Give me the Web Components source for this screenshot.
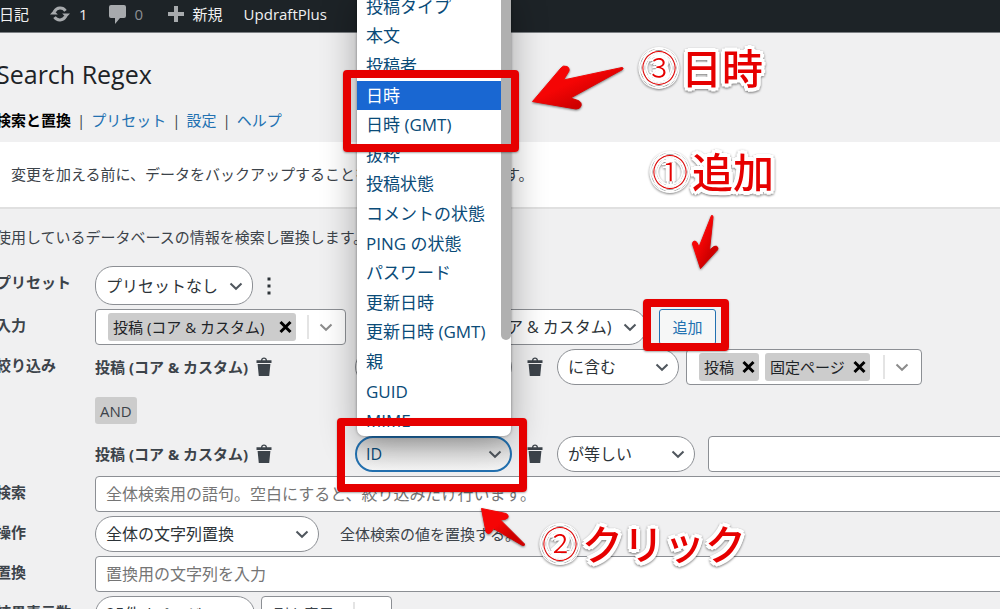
<!DOCTYPE html>
<html lang="ja">
<head>
<meta charset="utf-8">
<title>Search Regex</title>
<style>
html{overflow:hidden}
body{margin:0;background:#f0f0f1;font:15px/20px "Open Sans","Noto Sans CJK JP",sans-serif;color:#3c434a}
</style>
</head>
<body>
<regex-app></regex-app>
<script>
function element(name, css, render) {
  customElements.define(name, class extends HTMLElement {
    connectedCallback() {
      if (this.shadowRoot) return;
      const root = this.attachShadow({ mode: 'open' });
      root.innerHTML = '<style>*{box-sizing:border-box}' + css + '</style>' + render(this);
    }
  });
}
const attr = (el, n, d = '') => el.getAttribute(n) || d;

element('chevron-icon', ':host{display:block;width:14px;height:14px;color:#50575e}svg{display:block}',
  () => '<svg width="14" height="14" viewBox="0 0 14 14" fill="none" stroke="currentColor" stroke-width="2"><path d="M1.5 4.5 7 9.8l5.500-5.300"/></svg>');

/* rounded drop-down */
element('pill-select', `
  :host{display:block;position:relative;width:var(--w,158px);height:var(--h,36px);flex:none}
  select{appearance:none;width:100%;height:100%;margin:0;padding:0 30px 0 10px;border:1px solid #8c8f94;border-radius:18px;
    background:#fff;color:#2c3338;font:inherit;font-size:16px;outline:none}
  :host([focused]) select{border:2px solid #2271b1;color:#0a4b78;padding-left:9px;background:linear-gradient(#cdcdcd,#e6e6e6 45%,#f8f8f8)}
  chevron-icon{position:absolute;right:10px;top:0;bottom:0;margin:auto;pointer-events:none}`,
  el => `<select aria-label="${attr(el, 'label')}"><option>${attr(el, 'value')}</option></select><chevron-icon></chevron-icon>`);

/* box of removable tags */
element('tag-select', `
  :host{display:flex;align-items:center;width:var(--w);height:36px;padding-left:12px;border:1px solid #8c8f94;border-radius:4px;background:#fff;flex:none}
  .tags{display:flex;gap:6px;flex:1}
  ::slotted(*){flex:none}
  button{border:0;border-left:2px solid #e4e4e4;background:none;padding:0 10px;height:24px;margin:0}
  chevron-icon{color:#8c8c8c;width:16px}`,
  el => `<div class="tags"><slot></slot></div><button aria-label="${attr(el, 'label')}を開く"><chevron-icon></chevron-icon></button>`);

element('tag-item', `
  :host{display:flex;align-items:center;justify-content:space-between;min-width:var(--min,0);height:28px;padding:0 4px 0 5px;border-radius:3px;background:#ccc;color:#1d2327;white-space:nowrap}
  button{border:0;background:none;padding:0;margin:0 0 0 8px;display:block;color:#000}svg{display:block}`,
  () => `<slot></slot><button aria-label="削除"><svg width="13" height="14" viewBox="0 0 13 14" stroke="currentColor" stroke-width="3"><path d="M1.500 2 11.500 12M11.500 2 1.500 12"/></svg></button>`);

element('trash-button', `
  :host{display:block}button{border:0;padding:0;margin:0;background:none;color:#3c434a;display:block}svg{display:block}`,
  () => `<button aria-label="削除"><svg width="16" height="20" viewBox="0 0 16 20" fill="currentColor"><path d="M.500 3.200H5Q5.300.500 8 .500T11 3.200h4.500V6H.500zM6.300 3.200h3.400Q9.300 1.800 8 1.800T6.300 3.200zM1.600 7h12.800l-1.200 12H2.800z"/></svg></button>`);

element('text-field', `
  :host{display:block;flex:1;height:36px}
  input{width:100%;height:100%;margin:0;padding:0 10px;border:1px solid #8c8f94;border-radius:4px;background:#fff;font:inherit;font-size:16px;outline:none}
  input::placeholder{color:#757575;opacity:1}`,
  el => `<input type="text" aria-label="${attr(el, 'label')}" placeholder="${attr(el, 'placeholder')}">`);

element('form-row', `
  :host{display:grid;grid-template-columns:99px minmax(0,1fr)}
  .label{padding-top:6px;font-weight:700;white-space:nowrap}
  .body{display:flex;align-items:center}`,
  el => `<div class="label">${attr(el, 'label')}</div><div class="body"><slot></slot></div>`);

element('filter-line', `
  :host{display:grid;grid-template-columns:260px 157px 45px minmax(0,1fr);align-items:center;height:36px;flex:1}
  .name{display:flex;align-items:center;gap:8px;font-weight:700;white-space:nowrap}
  .mid{position:relative;z-index:5}
  .trash{padding-left:15px}
  .cond{display:flex;align-items:center}`,
  () => `<div class="name">投稿 (コア &amp; カスタム)<trash-button></trash-button></div>
   <div class="mid"><slot name="field"></slot></div><div class="trash"><trash-button></trash-button></div><div class="cond"><slot></slot></div>`);

/* opened list of fields, hanging above its select */
element('option-menu', `
  :host{position:absolute;left:2px;bottom:100%;width:154px;height:444px;display:flex;background:#fff;border-radius:0 0 7px 7px;
    box-shadow:0 8px 36px rgba(0,0,0,.32),0 0 3px rgba(0,0,0,.4);overflow:hidden}
  ul{list-style:none;margin:0;padding:0;flex:1;display:flex;flex-direction:column;color:#0a4b78;font-size:17px}
  li{flex:1;display:flex;align-items:center;padding-left:9px;white-space:nowrap}
  li[aria-selected=true]{background:#1967d2;color:#fff}
  .bar{width:10px}.thumb{height:348px;background:#b0b0b0;border-radius:0 0 5px 5px}`,
  () => '<ul role="listbox" aria-label="項目">' +
    ['投稿タイプ','本文','投稿者','日時','日時 (GMT)','抜粋','投稿状態','コメントの状態','PING の状態','パスワード','更新日時','更新日時 (GMT)','親','GUID','MIME']
    .map((t, i) => `<li role="option" aria-selected="${i === 3}">${t}</li>`).join('') + '</ul><div class="bar"><div class="thumb"></div></div>');

element('admin-bar', `
  :host{display:flex;align-items:center;box-sizing:border-box;height:33px;padding-bottom:4px;margin-left:-1px;background:#1d2327;border-bottom:1px solid #7c8084;color:#f0f0f1;white-space:nowrap;overflow:hidden}
  a{display:flex;align-items:center;color:inherit;text-decoration:none;gap:9px;margin-right:21px}
  svg{display:block;color:#a7aaad}.dim{color:#8c8f94;min-width:38px}`,
  () => `<a href="#">日記</a>
  <a href="#"><svg width="20" height="18" viewBox="0 0 20 18"><g fill="none" stroke="currentColor" stroke-width="3"><path d="M4.500 6.500A6.500 6.500 0 0 1 15.500 5.800"/><path d="M15.500 11.500A6.500 6.500 0 0 1 4.500 12.200"/></g><path fill="currentColor" d="M12.200 8.500h7.800L16.200 12.800zM0 9.500h7.800L3.800 5.200z"/></svg>1</a>
  <a href="#" class="dim"><svg width="17" height="20" viewBox="0 0 17 20" fill="currentColor"><path d="M2 1h13q2 0 2 2v9q0 2-2 2h-4l-5 6v-6H2q-2 0-2-2V3q0-2 2-2z"/></svg>0</a>
  <a href="#"><svg width="16" height="16" viewBox="0 0 16 16" fill="currentColor"><path d="M6 0h4v6h6v4h-6v6H6v-6H0V6h6z"/></svg>新規</a>
  <a href="#">UpdraftPlus</a>`);

element('page-header', `
  :host{display:block;box-sizing:border-box;padding:25px 0 0;height:109px}
  h1{margin:0;font-size:25px;line-height:32px;font-weight:400;color:#1d2327;white-space:nowrap}
  nav{display:flex;gap:6px;margin-top:20px;white-space:nowrap}
  a{color:#2271b1;text-decoration:none}a[aria-current]{color:#000;font-weight:700}`,
  () => `<h1>Search Regex</h1><nav><a href="#" aria-current="page">検索と置換</a><span>|</span><a href="#">プリセット</a><span>|</span><a href="#">設定</a><span>|</span><a href="#">ヘルプ</a></nav>`);

element('notice-bar', `:host{display:block;padding:22px 15px 23px;background:#fff;border-bottom:2px solid #e0e0e0;white-space:nowrap}`,
  () => '<slot></slot>');

element('logic-tag', `:host{display:block;box-sizing:border-box;height:27px;padding:4px 5px;border-radius:3px;background:#ccc}`, () => '<slot></slot>');

element('add-button', `:host{display:block;margin-left:12px}button{height:36px;width:57px;padding:0;border:1px solid #2271b1;border-radius:3px;background:#f6f7f7;color:#2271b1;font:inherit}`,
  () => '<button><slot></slot></button>');

/* annotations laid over the page */
element('mark-box', `:host{position:absolute;box-sizing:border-box;z-index:9;border:8px solid #e60000;border-radius:4px;box-shadow:0 1px 2px rgba(0,0,0,.35)}`, () => '');
element('mark-text', `
  :host{position:absolute;z-index:9;display:flex;gap:4px;font-size:41px;line-height:48px;font-weight:500;font-family:"Noto Sans CJK JP",sans-serif;color:#e60000;white-space:nowrap;
   text-shadow:4px 0 #fff,-4px 0 #fff,0 4px #fff,0 -4px #fff,3px 3px #fff,-3px 3px #fff,3px -3px #fff,-3px -3px #fff,2px 0 #fff,-2px 0 #fff,0 2px #fff,0 -2px #fff;
   filter:drop-shadow(0 1px 1px rgba(0,0,0,.5))}
  ::slotted(i){font-style:normal;font-weight:300;font-size:36px}`, () => '<slot></slot>');
element('mark-arrows', `:host{position:absolute;z-index:9;left:0;top:0;pointer-events:none}svg{display:block;filter:drop-shadow(0 1px 1px rgba(0,0,0,.5))}`,
  () => `<svg width="760" height="600" viewBox="0 0 760 600"><defs><linearGradient id="g" x1="0" y1="0" x2="1" y2="1"><stop offset=".4" stop-color="#f50505"/><stop offset=".7" stop-color="#cf0000"/></linearGradient></defs>
  <g fill="url(#g)" stroke="url(#g)" stroke-width="1" stroke-linejoin="round">
  <path d="M532.500 101.500 561 68Q563 65 567 66.500 570 68 569 71L563.500 80 622 67.500Q624 68 622.500 69.500L570.500 98 578 100.500Q582 102 581 106 580 109 576 109z"/>
  <path d="M700.500 268.500 692.500 244Q692.500 241 695 241 697 241 699 247L711.500 215.500Q713 215 713 217L709.500 250 714 246.500Q717 245 718 248 718 250 716 251.500z"/>
  <path d="M481.500 508.500 506 513.500Q509 515 508 517.500 507 519.500 500.500 520L524.500 544Q525 546 522.500 545.500L493.500 528.500 491 532.500Q488 535 486 532z"/>
  </g></svg>`);

element('regex-app', `
  :host{display:block;position:relative;height:100vh;overflow:hidden}
  main{margin:0 -8px 0 -4px}
  p{margin:0;padding:18px 0 19px;white-space:nowrap}
  form{display:flex;flex-direction:column;gap:4px}
  .kebab{border:0;background:none;padding:0;margin:0 0 0 13px;width:6px;height:20px;color:#2c3338}
  .kebab svg{display:block}
  .filters{display:flex;flex-direction:column;align-items:flex-start;gap:12px;flex:1}
  .filters filter-line{width:100%;flex:none}
  .hint{margin-left:21px;white-space:nowrap}`,
  () => `<admin-bar></admin-bar>
  <main><page-header></page-header>
  <notice-bar>変更を加える前に、データをバックアップすることを強くお勧めいたします。</notice-bar>
  <p>使用しているデータベースの情報を検索し置換します。</p>
  <form>
   <form-row label="プリセット"><pill-select label="プリセット" value="プリセットなし" style="--h:39px"></pill-select>
     <button type="button" class="kebab" aria-label="メニュー"><svg width="6" height="20" viewBox="0 0 6 20" fill="currentColor"><path d="M1.500 1.500h3v3h-3zM1.500 8.500h3v3h-3zM1.500 15.500h3v3h-3z"/></svg></button></form-row>
   <form-row label="入力"><tag-select label="入力" style="--w:251px"><tag-item style="--min:188px">投稿 (コア &amp; カスタム)</tag-item></tag-select>
     <pill-select label="追加する入力" value="投稿 (コア &amp; カスタム)" style="--w:208px;margin-left:93px"></pill-select><add-button>追加</add-button></form-row>
   <form-row label="絞り込み"><div class="filters">
     <filter-line><pill-select slot="field" label="項目" value="投稿タイプ" style="--w:157px"></pill-select>
       <pill-select label="条件" value="に含む" style="--w:122px"></pill-select>
       <tag-select label="値" style="--w:236px;margin-left:7px"><tag-item>投稿</tag-item><tag-item>固定ページ</tag-item></tag-select></filter-line>
     <logic-tag>AND</logic-tag>
     <filter-line><pill-select slot="field" focused label="項目" value="ID" style="--w:157px"></pill-select><option-menu slot="field"></option-menu>
       <pill-select label="条件" value="が等しい" style="--w:138px"></pill-select>
       <text-field label="値" style="margin-left:13px"></text-field></filter-line>
   </div></form-row>
   <form-row label="検索"><text-field label="検索" placeholder="全体検索用の語句。空白にすると、絞り込みだけ行います。"></text-field></form-row>
   <form-row label="操作"><pill-select label="操作" value="全体の文字列置換" style="--w:224px"></pill-select><span class="hint">全体検索の値を置換する。</span></form-row>
   <form-row label="置換"><text-field label="置換" placeholder="置換用の文字列を入力"></text-field></form-row>
   <form-row label="結果表示数"><pill-select label="結果表示数" value="25件 / ページ" style="--w:160px"></pill-select>
     <tag-select label="列" style="--w:131px;margin-left:6px">列を表示</tag-select></form-row>
  </form></main>
  <mark-box style="left:343px;top:70px;width:176px;height:82px"></mark-box>
  <mark-box style="left:337px;top:418px;width:190px;height:74px"></mark-box>
  <mark-box style="left:643px;top:299px;width:86px;height:52px"></mark-box>
  <mark-text style="left:641px;top:42px"><i>③</i>日時</mark-text>
  <mark-text style="left:652px;top:146px"><i>①</i>追加</mark-text>
  <mark-text style="left:542px;top:518px"><i>②</i>クリック</mark-text>
  <mark-arrows></mark-arrows>`);
</script>
</body>
</html>
